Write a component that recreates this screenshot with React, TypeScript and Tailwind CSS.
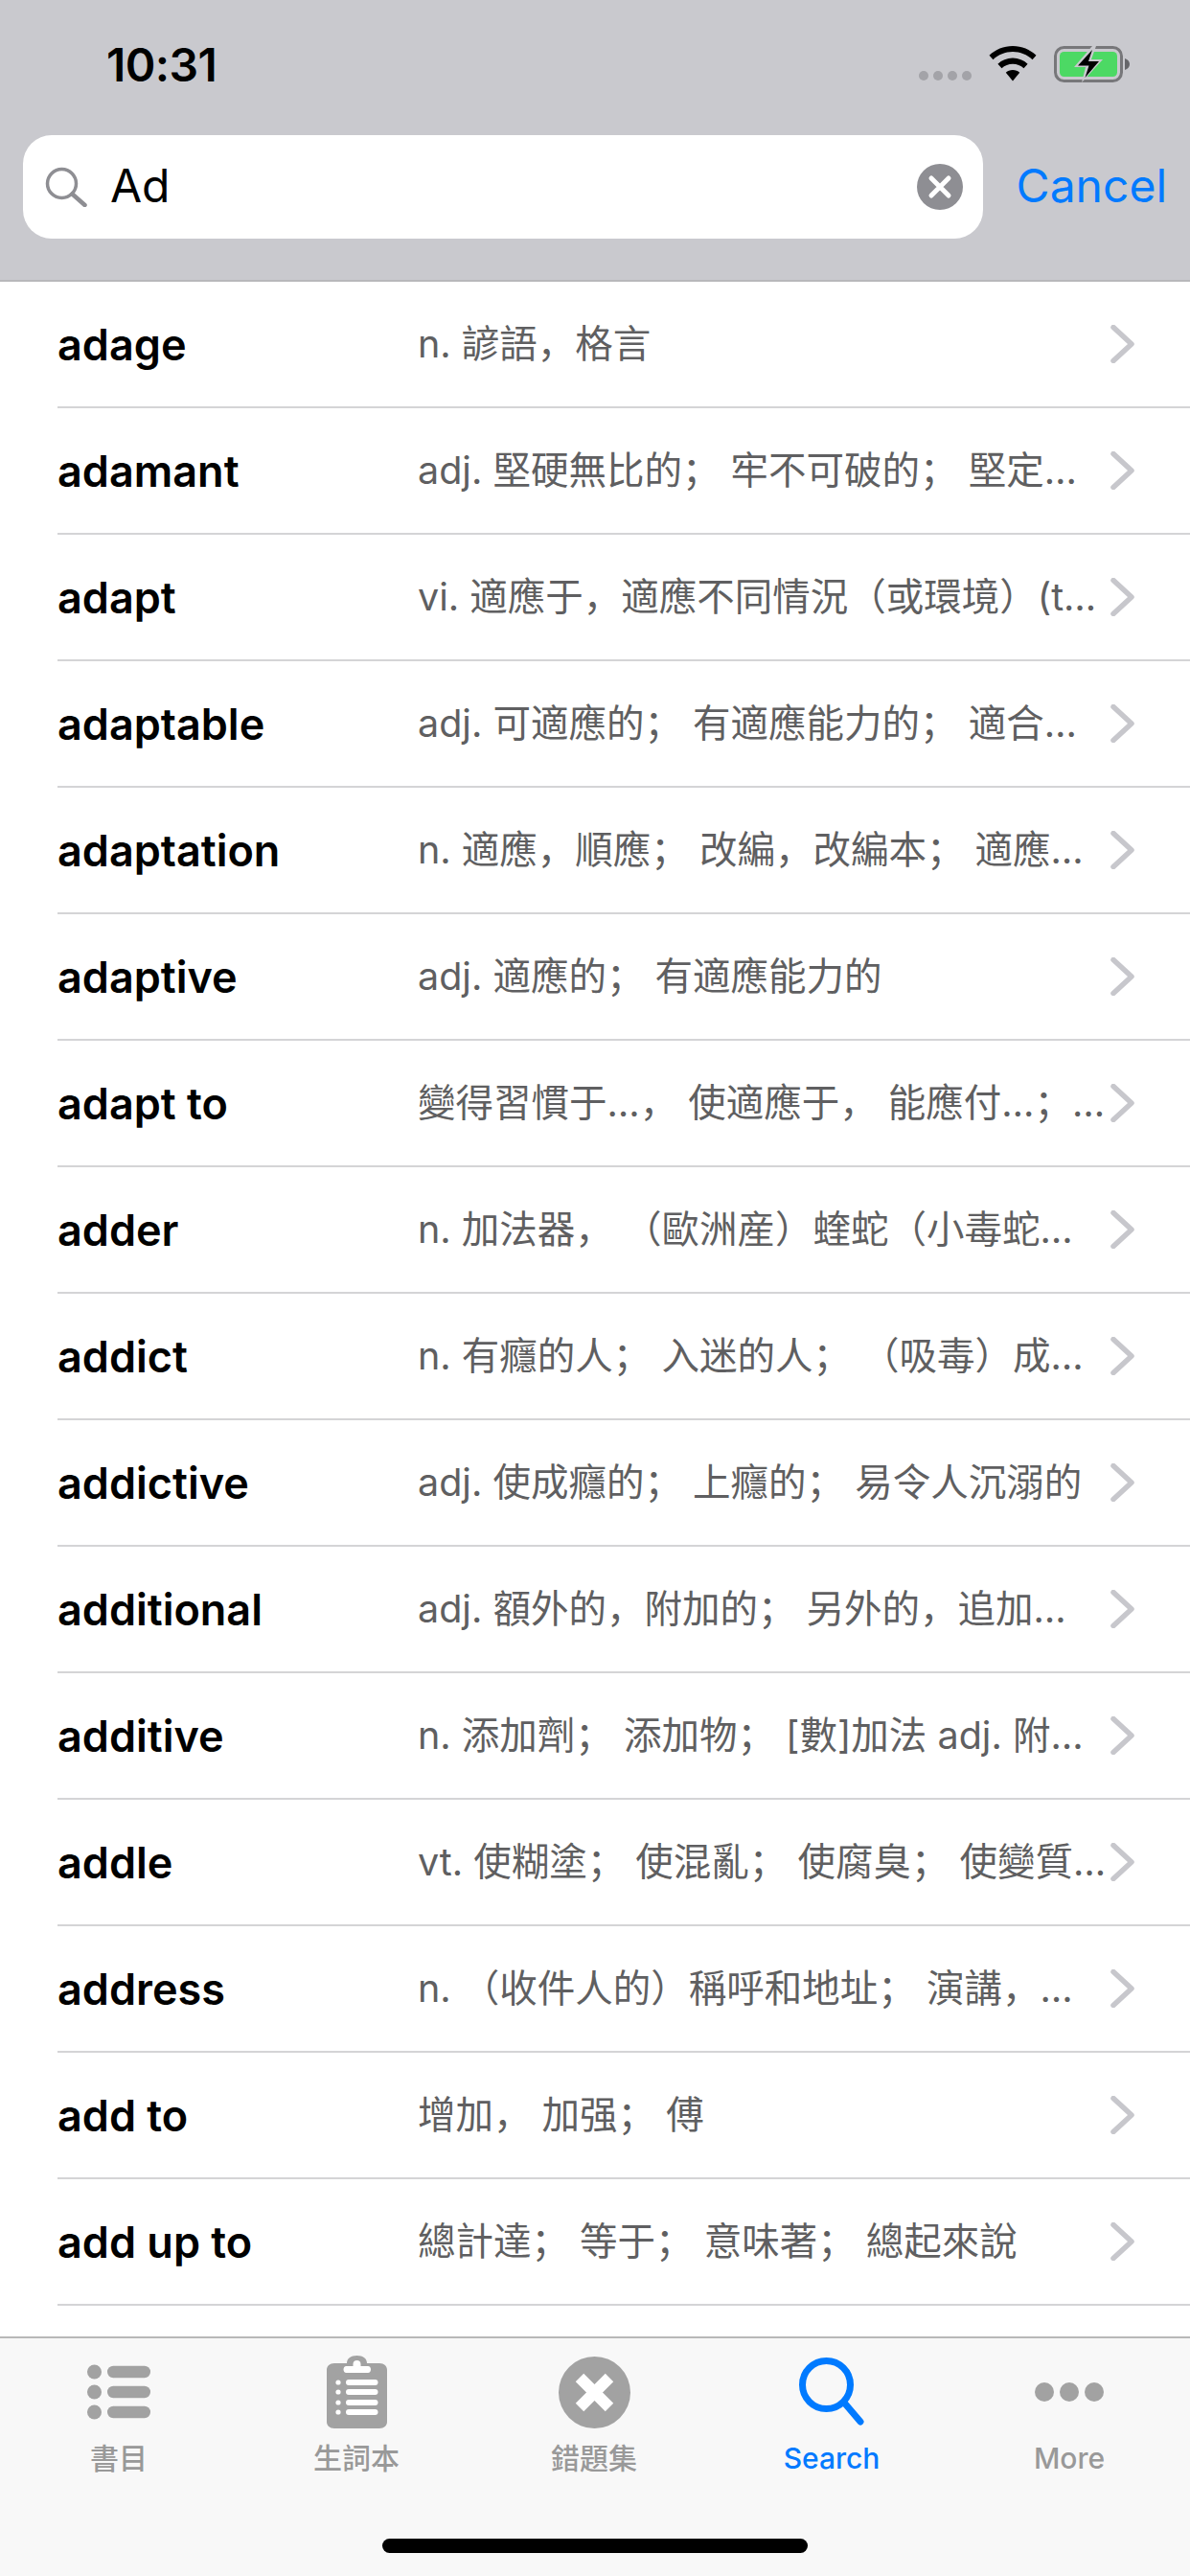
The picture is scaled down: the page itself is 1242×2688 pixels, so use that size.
const rows: [string, string][] = [
  ["adage", "n. 諺語，格言"],
  ["adamant", "adj. 堅硬無比的； 牢不可破的； 堅定…"],
  ["adapt", "vi. 適應于，適應不同情況（或環境）(t…"],
  ["adaptable", "adj. 可適應的； 有適應能力的； 適合…"],
  ["adaptation", "n. 適應，順應； 改編，改編本； 適應…"],
  ["adaptive", "adj. 適應的； 有適應能力的"],
  ["adapt to", "變得習慣于…， 使適應于， 能應付…；…"],
  ["adder", "n. 加法器， （歐洲産）蝰蛇（小毒蛇…"],
  ["addict", "n. 有癮的人； 入迷的人； （吸毒）成…"],
  ["addictive", "adj. 使成癮的； 上癮的； 易令人沉溺的"],
  ["additional", "adj. 額外的，附加的； 另外的，追加…"],
  ["additive", "n. 添加劑； 添加物； [數]加法 adj. 附…"],
  ["addle", "vt. 使糊塗； 使混亂； 使腐臭； 使變質…"],
  ["address", "n. （收件人的）稱呼和地址； 演講，…"],
  ["add to", "增加， 加强； 傅"],
  ["add up to", "總計達； 等于； 意味著； 總起來說"],
];

const font = "font-['Inter','Noto_Sans_CJK_SC',sans-serif]";

function Chevron() {
  return (
    <svg width="26" height="40" viewBox="0 0 26 40" fill="none" className="shrink-0">
      <path d="M3 2.5 L22 20 L3 37.5" stroke="#c7c7cc" strokeWidth="5.5" strokeLinecap="round" strokeLinejoin="round" />
    </svg>
  );
}

function Wifi() {
  return (
    <svg width="50" height="37" viewBox="0 0 50 37" fill="#000">
      <path d="M25 0 C34.5 0 43 3.7 49.5 9.7 L45.5 14.2 C40 9 32.9 6 25 6 C17.1 6 10 9 4.5 14.2 L0.5 9.7 C7 3.7 15.5 0 25 0 Z" />
      <path d="M25 12.5 C31 12.5 36.4 14.8 40.6 18.7 L36.5 23.2 C33.4 20.4 29.4 18.7 25 18.7 C20.6 18.7 16.6 20.4 13.5 23.2 L9.4 18.7 C13.6 14.8 19 12.5 25 12.5 Z" />
      <path d="M25 25 C27.9 25 30.3 26 32.2 27.7 L25 36.5 L17.8 27.7 C19.7 26 22.1 25 25 25 Z" />
    </svg>
  );
}

function Battery() {
  return (
    <svg width="80" height="38" viewBox="0 0 80 38" fill="none">
      <rect x="1.5" y="1.5" width="69" height="35" rx="9" stroke="#77777a" strokeWidth="3" />
      <rect x="6" y="6" width="60" height="26" rx="4.5" fill="#4cd964" />
      <path d="M74 13 C77 14 79 16 79 19 C79 22 77 24 74 25 Z" fill="#66666a" />
      <path d="M40 0 L21 22 L33 22 L29 38 L51 14 L39 14 L44 0 Z" fill="#c9c9ce" />
      <path d="M40 4 L25 20.5 L36.5 20.5 L32.5 33 L47 16 L36 16 Z" fill="#000" />
    </svg>
  );
}

function SearchGlass() {
  return (
    <svg width="44" height="42" viewBox="0 0 44 42" fill="none" className="shrink-0">
      <circle cx="17.5" cy="17.5" r="15" stroke="#8e8e93" strokeWidth="3.5" />
      <path d="M28.5 28.5 L41.5 40" stroke="#8e8e93" strokeWidth="4.5" strokeLinecap="round" />
    </svg>
  );
}

function ClearButton() {
  return (
    <svg width="48" height="48" viewBox="0 0 48 48" className="shrink-0">
      <circle cx="24" cy="24" r="24" fill="#8e8e93" />
      <path d="M15 15 L33 33 M33 15 L15 33" stroke="#fff" strokeWidth="5" strokeLinecap="round" />
    </svg>
  );
}

function ListIcon() {
  return (
    <svg width="66" height="58" viewBox="0 0 66 58" fill="#a2a2a2">
      <circle cx="7.5" cy="8" r="7.5" />
      <circle cx="7.5" cy="29" r="7.5" />
      <circle cx="7.5" cy="50" r="7.5" />
      <rect x="21" y="1.75" width="45" height="12.5" rx="6.25" />
      <rect x="21" y="22.75" width="45" height="12.5" rx="6.25" />
      <rect x="21" y="43.75" width="45" height="12.5" rx="6.25" />
    </svg>
  );
}

function ClipboardIcon() {
  return (
    <svg width="63" height="76" viewBox="0 0 63 76">
      <path
        d="M21 8 C21 3 25 0 31.5 0 C38 0 42 3 42 8 L55 8 C60 8 63 11 63 15 L63 69 C63 73 60 76 55 76 L8 76 C3 76 0 73 0 69 L0 15 C0 11 3 8 8 8 Z"
        fill="#a2a2a2"
      />
      <path d="M31.5 5 C29 5 27.5 6.5 27.5 9 L27.5 11 L20.5 11 C16.5 11 16.5 18 20.5 18 L43 18 C47 18 47 11 43 11 L35.5 11 L35.5 9 C35.5 6.5 34 5 31.5 5 Z" fill="#fff" />
      {[28, 38, 49, 59].map((y) => (
        <g key={y} fill="#fff">
          <circle cx="12" cy={y} r="2.6" />
          <rect x="20" y={y - 3} width="33.5" height="6" rx="3" />
        </g>
      ))}
    </svg>
  );
}

function XCircleIcon() {
  return (
    <svg width="75" height="75" viewBox="0 0 75 75">
      <circle cx="37.5" cy="37.5" r="37.5" fill="#a2a2a2" />
      <path d="M22 22 L53 53 M53 22 L22 53" stroke="#fff" strokeWidth="12" />
    </svg>
  );
}

function SearchTabIcon() {
  return (
    <svg width="68" height="72" viewBox="0 0 68 72" fill="none">
      <circle cx="28.5" cy="28.5" r="25" stroke="#007aff" strokeWidth="7" />
      <path d="M47 47 L64 67" stroke="#007aff" strokeWidth="7" strokeLinecap="round" />
    </svg>
  );
}

function MoreIcon() {
  return (
    <svg width="72" height="20" viewBox="0 0 72 20" fill="#a2a2a2">
      <circle cx="10" cy="10" r="10" />
      <circle cx="36" cy="10" r="10" />
      <circle cx="62" cy="10" r="10" />
    </svg>
  );
}

const tabs = [
  { label: "書目", icon: <ListIcon />, active: false },
  { label: "生詞本", icon: <ClipboardIcon />, active: false },
  { label: "錯題集", icon: <XCircleIcon />, active: false },
  { label: "Search", icon: <SearchTabIcon />, active: true },
  { label: "More", icon: <MoreIcon />, active: false },
];

export default function App() {
  return (
    <div className={`flex h-[2688px] w-[1242px] flex-col overflow-hidden bg-white ${font}`}>
      <header className="h-[294px] shrink-0 border-b-2 border-[#b8b8bb] bg-[#c9c9ce]">
        <div className="flex h-[141px] items-start pt-[44px] pl-[111px] pr-[62px]">
          <span className="text-[48px] leading-[48px] font-semibold tracking-[-0.6px] text-black">10:31</span>
          <div className="ml-auto flex items-start">
            <div className="mt-[30px] mr-[18px] flex gap-[5px]">
              <span className="h-[10px] w-[10px] rounded-full bg-[#a3a3a8]" />
              <span className="h-[10px] w-[10px] rounded-full bg-[#a3a3a8]" />
              <span className="h-[10px] w-[10px] rounded-full bg-[#a3a3a8]" />
              <span className="h-[10px] w-[10px] rounded-full bg-[#a3a3a8]" />
            </div>
            <div className="mt-[4px] flex items-start gap-[18px]">
              <Wifi />
              <Battery />
            </div>
          </div>
        </div>
        <div className="flex items-center pl-[24px] pr-[24px]">
          <div className="flex h-[108px] w-[1002px] items-center rounded-[30px] bg-white pl-[23px] pr-[21px]">
            <SearchGlass />
            <span className="mb-[2px] ml-[24px] text-[48px] leading-none text-black">Ad</span>
            <div className="ml-auto">
              <ClearButton />
            </div>
          </div>
          <span className="mb-[2px] ml-auto text-[48px] leading-none text-[#007aff]">Cancel</span>
        </div>
      </header>

      <main className="min-h-0 flex-1">
        {rows.map(([word, desc]) => (
          <div key={word} className="ml-[60px] flex h-[132px] items-center border-b-2 border-[#d4d4d6] pr-[57px]">
            <span className="w-[376px] shrink-0 pt-[2px] text-[45px] font-semibold text-black">{word}</span>
            <span className="min-w-0 flex-1 whitespace-nowrap pt-[2px] text-[39.5px] text-[#5f5f61]">{desc}</span>
            <Chevron />
          </div>
        ))}
      </main>

      <nav className="relative h-[250px] shrink-0 border-t-2 border-[#b8b8b8] bg-[#f8f8f8]">
        <div className="grid w-[1240px] grid-cols-5">
          {tabs.map((t) => (
            <div key={t.label} className="flex flex-col items-center">
              <div className="flex h-[106px] items-center pt-[6px]">{t.icon}</div>
              <span className={`text-[30px] leading-[38px] font-medium ${t.active ? "text-[#007aff]" : "text-[#999999]"}`}>
                {t.label}
              </span>
            </div>
          ))}
        </div>
        <div className="absolute bottom-[24px] left-[399px] h-[15px] w-[444px] rounded-full bg-black" />
      </nav>
    </div>
  );
}
